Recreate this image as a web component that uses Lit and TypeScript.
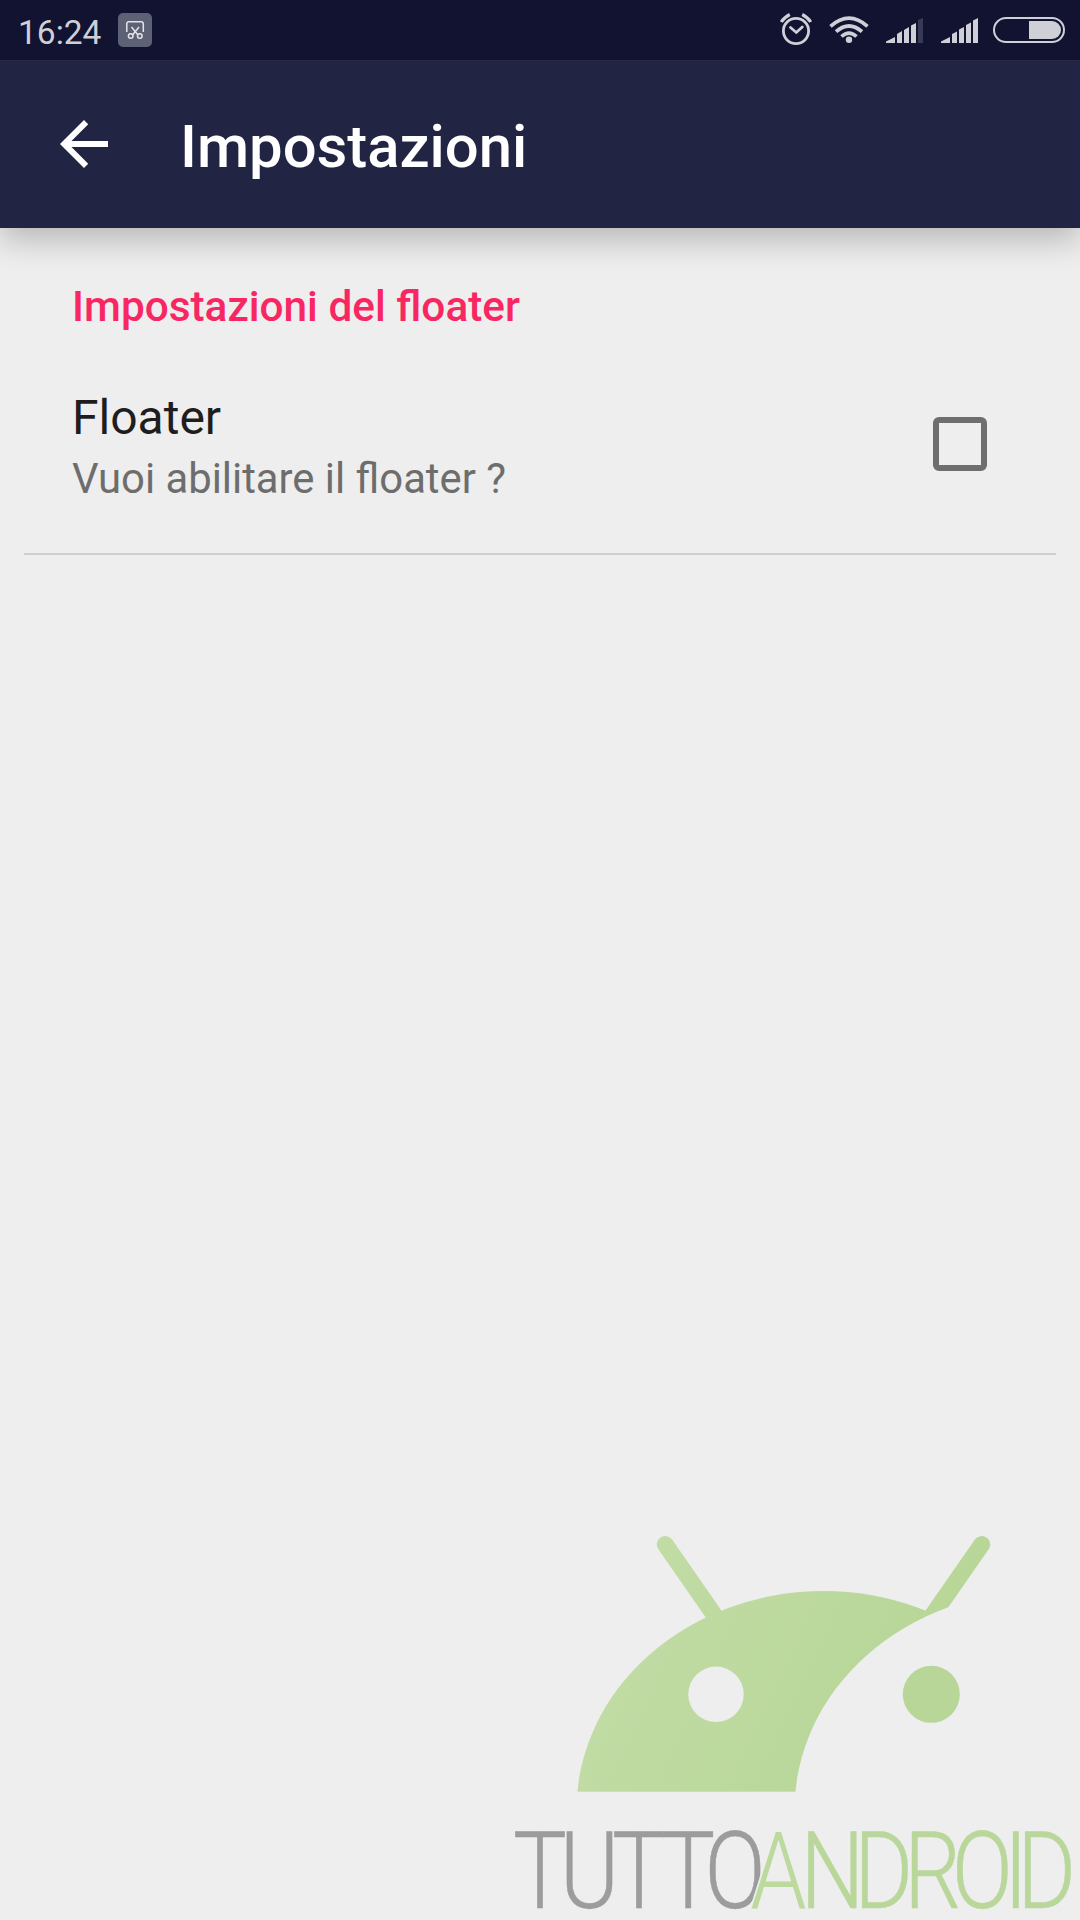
import { LitElement, html, css, svg } from "lit";
import { customElement, property } from "lit/decorators.js";

@customElement("status-bar")
class StatusBar extends LitElement {
  static styles = css`
    :host { display: flex; align-items: center; height: 60px; box-sizing: border-box; padding: 0 14px 0 18px; background: #111331; color: #cfd0d7; }
    .time { font-size: 33.500px; line-height: 54px; padding-top: 5px; width: 100px; }
    .badge { display: block; width: 34px; height: 34px; }
    .icons { display: block; margin-left: auto; width: 290px; height: 60px; }
  `;
  render() {
    return html`
      <span class="time">16:24</span>
      <svg class="badge" viewBox="0 0 34 34" fill="none" stroke="#e3e4e8" stroke-width="1.5">
        <rect width="34" height="34" rx="5" fill="#5d6175" stroke="none" />
        <path d="M8.800 19V11Q8.800 8.800 11 8.800H23Q25.300 8.800 25.300 11V19" />
        <path d="M13.500 14L20 22M21 14L14.500 22" />
        <circle cx="12.700" cy="23" r="2.300" /><circle cx="21.800" cy="23" r="2.300" />
      </svg>
      <svg class="icons" viewBox="776 0 290 60" fill="#cfd0d7">
        <g fill="none" stroke="#cfd0d7">
          <circle cx="796" cy="31" r="12.600" stroke-width="2.800" />
          <path d="M790.500 27.500L796.300 32.500L802.300 27" stroke-width="2.800" stroke-linecap="round" />
          <path d="M781.300 22Q784 17.500 789.800 14.500M802.200 14.500Q808 17.500 810.700 22" stroke-width="3.200" />
          <path d="M830.500 26.300Q849 10 867.500 26.300" stroke-width="3.700" />
          <path d="M836 31.700Q849 20.200 862 31.700" stroke-width="3.700" />
          <path d="M841.500 36.500Q849 29.700 856.500 36.500" stroke-width="3.700" />
        </g>
        <circle cx="849" cy="39.800" r="3.200" />
        <path d="M886 43V41.500L895 37V43ZM897 43V34L902 31V43ZM904 43V30L909 27V43ZM911 43V25.500L916 23V43Z" />
        <path d="M918 43V20L923 18V43Z" fill="#373955" />
        <path d="M941 43V41.500L950 37V43ZM952 43V34L957 31.500V43ZM959 43V29.500L964 27V43ZM966 43V25L971 22.500V43ZM973 43V20.500L978 18V43Z" />
        <rect x="994" y="18" width="70" height="24" rx="12" fill="none" stroke="#cfd0d7" stroke-width="2" />
        <path d="M1029 21H1052A9 9 0 0 1 1052 39H1029Z" />
      </svg>`;
  }
}

@customElement("app-toolbar")
class AppToolbar extends LitElement {
  @property() heading = "";
  static styles = css`
    :host { display: flex; align-items: center; height: 168px; box-sizing: border-box; padding: 0 48px; gap: 60px; background: #222443; position: relative; z-index: 1; box-shadow: inset 0 1px 0 #2a284a, 0 12px 30px rgba(0, 0, 0, 0.23); clip-path: inset(0 0 -48px 0); }
    .back { display: block; width: 72px; height: 72px; }
    .title { font-size: 59.800px; font-weight: 500; line-height: 72px; color: #fff; padding-top: 6px; }
  `;
  render() {
    return html`
      <svg class="back" viewBox="0 0 24 24" fill="#fff"><path d="M20 11H7.830l5.590-5.590L12 4l-8 8 8 8 1.410-1.410L7.830 13H20v-2z" /></svg>
      <span class="title">${this.heading}</span>`;
  }
}

@customElement("preference-row")
class PreferenceRow extends LitElement {
  @property() label = "";
  @property() summary = "";
  static styles = css`
    :host { display: flex; align-items: center; justify-content: space-between; margin: 0 24px; padding: 0 69px 0 48px; height: 217px; box-sizing: border-box; border-bottom: 2px solid #cfcfcf; }
    .texts { display: flex; flex-direction: column; padding-top: 6px; }
    .label { font-size: 48px; line-height: 60px; color: #1e1e1e; }
    .summary { font-size: 41.800px; line-height: 62px; color: #6d6d6d; }
    .box { width: 54px; height: 54px; margin-bottom: 3px; box-sizing: border-box; border: 6px solid #6e6e6e; border-radius: 6px; }
  `;
  render() {
    return html`
      <div class="texts"><span class="label">${this.label}</span><span class="summary">${this.summary}</span></div>
      <span class="box"></span>`;
  }
}

// The wordmark is set in a narrowed light face with each letter placed on its own.
const SX = 0.84;
const letters = (word: string, xs: number[]) =>
  svg`<text transform=${`scale(${SX} 1)`} x=${xs.map((x) => (x / SX).toFixed(2)).join(" ")} y="1908">${word}</text>`;

@customElement("brand-mark")
class BrandMark extends LitElement {
  static styles = css`
    :host { display: block; }
    .art { display: block; width: 580px; height: 400px; }
    text { font-family: Roboto, sans-serif; font-weight: 300; font-size: 107.500px; }
    .grey { fill: #9c9c9c; stroke: #9c9c9c; stroke-width: 0.500px; }
    .green { fill: #b9d79a; stroke: #b9d79a; stroke-width: 0.500px; }
    .halo { fill: #bcda9e; stroke: #eee; stroke-width: 4px; paint-order: stroke; }
  `;
  render() {
    return html`
      <svg class="art" viewBox="500 1520 580 400">
        <defs>
          <linearGradient id="leaf" gradientUnits="userSpaceOnUse" x1="600" y1="1620" x2="900" y2="1760">
            <stop offset="0" stop-color="#c2dca5" /><stop offset="1" stop-color="#b7d697" />
          </linearGradient>
          <mask id="cut" maskUnits="userSpaceOnUse" x="500" y="1520" width="580" height="400">
            <rect x="500" y="1520" width="580" height="271.700" fill="#fff" />
            <ellipse cx="1041.500" cy="1810" rx="247" ry="219" fill="#000" />
            <circle cx="716" cy="1694.300" r="27.700" fill="#000" />
          </mask>
        </defs>
        <g mask="url(#cut)">
          <path d="M665.300 1544.500L715 1616M981.700 1544.500L932 1616" stroke="url(#leaf)" stroke-width="17" stroke-linecap="round" />
          <ellipse cx="823.500" cy="1810" rx="247" ry="219" fill="url(#leaf)" />
        </g>
        <circle cx="931.300" cy="1694.300" r="28.500" fill="#b8d698" />
        <g class="grey">${letters("TUTTO", [512.9, 559.7, 612, 661.2, 704.4])}</g>
        <g class="halo">${letters("A", [750.2])}</g>
        <g class="green">${letters("NDROID", [800.3, 854, 904.1, 951.8, 1003.8, 1017])}</g>
      </svg>`;
  }
}

@customElement("app-root")
class AppRoot extends LitElement {
  static styles = css`
    :host { display: flex; flex-direction: column; width: 1080px; height: 1920px; overflow: hidden; background: #eee; font-family: Roboto, sans-serif; }
    .section { padding: 49px 72px 0; font-size: 42.350px; font-weight: 500; line-height: 60px; color: #f82763; height: 110px; box-sizing: border-box; }
    .brand { margin: auto 0 0 auto; }
  `;
  render() {
    return html`
      <status-bar></status-bar>
      <app-toolbar heading="Impostazioni"></app-toolbar>
      <div class="section">Impostazioni del floater</div>
      <preference-row label="Floater" summary="Vuoi abilitare il floater ?"></preference-row>
      <brand-mark class="brand"></brand-mark>`;
  }
}
